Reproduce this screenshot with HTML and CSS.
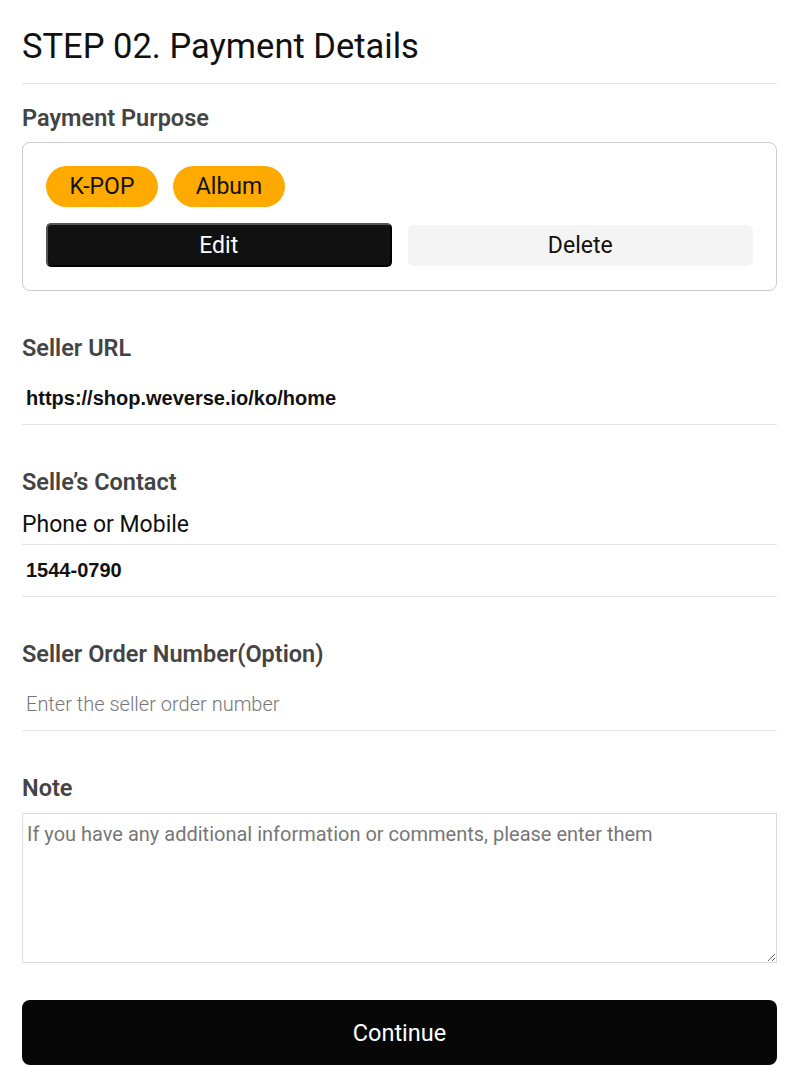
FILE: index.html
```html
<!DOCTYPE html>
<html>
  <head>
    <title>Payment Details</title>
    <meta charset="UTF-8"/>
    <link rel="stylesheet" href="styles.css">
  </head>
  <body>
    <div id="main-container">
      <h1 class="step-title">STEP 02. Payment Details</h1>

      <div class="field first">
        <div class="label">Payment Purpose</div>
        <div class="purpose-box">
          <div class="chips">
            <span class="chip">K-POP</span>
            <span class="chip">Album</span>
          </div>
          <div class="actions">
            <button class="btn-edit" type="button">Edit</button>
            <button class="btn-delete" type="button">Delete</button>
          </div>
        </div>
      </div>

      <div class="field">
        <div class="label">Seller URL</div>
        <input class="line-input" type="text" value="https://shop.weverse.io/ko/home">
      </div>

      <div class="field">
        <div class="label">Selle’s Contact</div>
        <div class="sub-label">Phone or Mobile</div>
        <input class="line-input" type="text" value="1544-0790">
      </div>

      <div class="field">
        <div class="label">Seller Order Number(Option)</div>
        <input class="line-input" type="text" placeholder="Enter the seller order number">
      </div>

      <div class="field">
        <div class="label">Note</div>
        <textarea class="note" placeholder="If you have any additional information or comments, please enter them"></textarea>
      </div>

      <button class="btn-continue" type="button">Continue</button>
    </div>
  </body>
</html>
```

FILE: styles.css
```css
body {
  margin: 0;
  font-family: "Roboto", "Liberation Sans", sans-serif;
  color: #111;
  background-color: white;
}
#main-container {
  display: flex;
  flex-direction: column;
  padding: 0 26px 0 22px;
}
.step-title {
  margin: 0;
  padding: 26px 0 17px 0;
  font-size: 34.5px;
  font-weight: 400;
  line-height: 40px;
  border-bottom: 1px solid #e5e5e5;
}
.field {
  display: flex;
  flex-direction: column;
  margin-top: 42px;
}
.field.first {
  margin-top: 19px;
}
.label {
  height: 30px;
  line-height: 30px;
  font-size: 23.5px;
  font-weight: 600;
  color: #444;
  margin-bottom: 10px;
}
.field.first .label {
  margin-bottom: 9px;
}
.purpose-box {
  display: flex;
  flex-direction: column;
  gap: 16px;
  padding: 23px;
  border: 1px solid #ccc;
  border-radius: 8px;
}
.chips {
  display: flex;
  gap: 15px;
}
.chip {
  display: flex;
  align-items: center;
  justify-content: center;
  width: 112px;
  height: 41px;
  border-radius: 21px;
  background-color: #ffaa00;
  font-size: 23px;
  color: #111;
}
.actions {
  display: grid;
  grid-template-columns: 1fr 1fr;
  gap: 16px;
  align-items: center;
}
.btn-edit, .btn-delete {
  padding: 0;
  font-family: "Roboto", "Liberation Sans", sans-serif;
  font-size: 23px;
}
.btn-edit {
  height: 44px;
  color: white;
  background-color: #111;
  border: 2px solid;
  border-color: #555 #000 #000 #555;
  border-radius: 5px;
}
.btn-delete {
  height: 41px;
  color: #111;
  background-color: #f4f4f4;
  border: none;
  border-radius: 6px;
}
.sub-label {
  font-size: 23px;
  line-height: 30px;
  padding: 3px 0 4px 0;
  border-bottom: 1px solid #e5e5e5;
}
.line-input {
  height: 52px;
  box-sizing: border-box;
  padding: 0 4px;
  border: none;
  border-bottom: 1px solid #e5e5e5;
  font-family: "Liberation Sans", Arial, sans-serif;
  font-size: 20px;
  font-weight: bold;
  color: #111;
  outline: none;
}
.line-input::placeholder {
  font-family: "Roboto", sans-serif;
  font-weight: 300;
  color: #777;
}
.note {
  height: 150px;
  box-sizing: border-box;
  padding: 8px 4px;
  border: 1px solid #ddd;
  font-family: "Roboto", sans-serif;
  font-size: 20px;
  resize: vertical;
}
.note::placeholder {
  color: #777;
}
.btn-continue {
  margin-top: 37px;
  height: 65px;
  border: none;
  border-radius: 8px;
  color: white;
  background-color: #070707;
  font-family: "Roboto", sans-serif;
  font-size: 23.5px;
}
```
